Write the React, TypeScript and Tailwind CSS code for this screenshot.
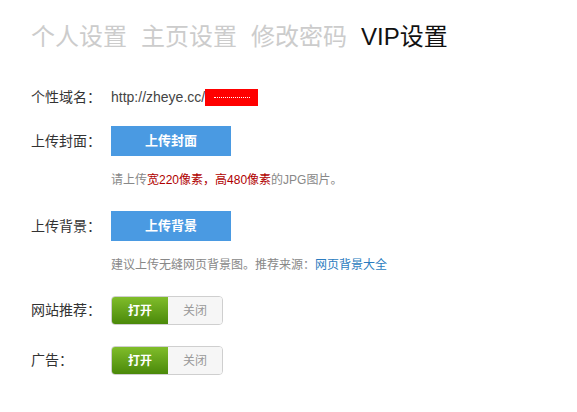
import React, { useState } from "react";

const font = { fontFamily: '"Liberation Sans", "Noto Sans CJK SC", sans-serif' };

const tabs: string[] = ["个人设置", "主页设置", "修改密码", "VIP设置"];

function Toggle({ on, onChange }: { on: boolean; onChange: (v: boolean) => void }) {
  return (
    <div className="flex h-[29px] w-[112px] overflow-hidden rounded-[4px] border border-[#cfcfcf] text-[12px] font-bold">
      <button
        onClick={() => onChange(true)}
        className={
          on
            ? "w-[56px] bg-gradient-to-b from-[#80bd2a] to-[#4a8908] text-white"
            : "w-[56px] bg-[#f6f6f6] font-normal text-[#999]"
        }
      >
        打开
      </button>
      <button
        onClick={() => onChange(false)}
        className={
          !on
            ? "flex-1 bg-gradient-to-b from-[#80bd2a] to-[#4a8908] text-white"
            : "flex-1 bg-[#f6f6f6] font-normal text-[#999]"
        }
      >
        关闭
      </button>
    </div>
  );
}

function App() {
  const [recommend, setRecommend] = useState(true);
  const [ads, setAds] = useState(true);

  return (
    <div className="h-[412px] w-[577px] bg-white pl-[31px] pt-[19px] text-[#333]" style={font}>
      <div className="flex h-[36px] items-center gap-[14px] text-[24px]">
        {tabs.map((t, i) => (
          <span key={i} className={i === 3 ? "text-[#111]" : "text-[#cccccc]"}>
            {t}
          </span>
        ))}
      </div>

      <div className="mt-[27px] flex h-[30px] items-center text-[14px]">
        <span className="w-[80px]">个性域名：</span>
        <span className="text-[#444]">http://zheye.cc/</span>
        <span className="flex h-[17px] w-[53px] items-center justify-center bg-[#ff0000]">
          <span className="w-[36px] border-t border-dotted border-white" />
        </span>
      </div>

      <div className="mt-[14px] flex h-[30px] items-center text-[14px]">
        <span className="w-[80px]">上传封面：</span>
        <button className="h-[30px] w-[120px] bg-[#4a9ae2] text-[13px] font-bold text-white">上传封面</button>
      </div>
      <div className="ml-[80px] mt-[15px] h-[18px] text-[12px] leading-[18px] text-[#888]">
        请上传<span className="text-[#b00000]">宽220像素，高480像素</span>的JPG图片。
      </div>

      <div className="mt-[22px] flex h-[30px] items-center text-[14px]">
        <span className="w-[80px]">上传背景：</span>
        <button className="h-[30px] w-[120px] bg-[#4a9ae2] text-[13px] font-bold text-white">上传背景</button>
      </div>
      <div className="ml-[80px] mt-[15px] h-[18px] text-[12px] leading-[18px] text-[#888]">
        建议上传无缝网页背景图。推荐来源：<a className="text-[#2b7cc0]">网页背景大全</a>
      </div>

      <div className="mt-[22px] flex h-[29px] items-center text-[14px]">
        <span className="w-[80px]">网站推荐：</span>
        <Toggle on={recommend} onChange={setRecommend} />
      </div>

      <div className="mt-[21px] flex h-[29px] items-center text-[14px]">
        <span className="w-[80px]">广告：</span>
        <Toggle on={ads} onChange={setAds} />
      </div>
    </div>
  );
}

export default App;
